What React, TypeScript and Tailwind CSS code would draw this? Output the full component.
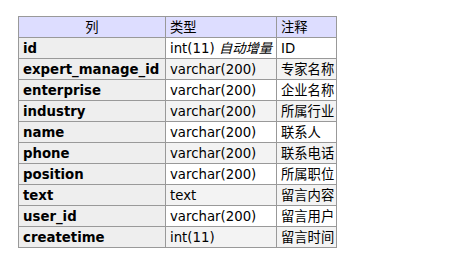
const rows: { name: string; type: string; extra?: string; comment: string }[] = [
  { name: "id", type: "int(11)", extra: "自动增量", comment: "ID" },
  { name: "expert_manage_id", type: "varchar(200)", comment: "专家名称" },
  { name: "enterprise", type: "varchar(200)", comment: "企业名称" },
  { name: "industry", type: "varchar(200)", comment: "所属行业" },
  { name: "name", type: "varchar(200)", comment: "联系人" },
  { name: "phone", type: "varchar(200)", comment: "联系电话" },
  { name: "position", type: "varchar(200)", comment: "所属职位" },
  { name: "text", type: "text", comment: "留言内容" },
  { name: "user_id", type: "varchar(200)", comment: "留言用户" },
  { name: "createtime", type: "int(11)", comment: "留言时间" },
];

export default function App() {
  return (
    <div
      className="w-[463px] h-[270px] bg-white pt-4 pl-[18px] text-[13.3px] text-black"
      style={{ fontFamily: '"DejaVu Sans", "Noto Sans CJK SC", sans-serif' }}
    >
      <table className="border-collapse border border-[#999] table-fixed w-[318px]">
        <colgroup>
          <col className="w-[147px]" />
          <col className="w-[111px]" />
          <col className="w-[60px]" />
        </colgroup>
        <thead>
          <tr className="h-[21px] bg-[#ddddff]">
            <th className="border border-[#999] px-1 pt-[2px] pb-0 font-normal text-center leading-4">列</th>
            <th className="border border-[#999] px-1 pt-[2px] pb-0 font-normal text-left leading-4">类型</th>
            <th className="border border-[#999] px-1 pt-[2px] pb-0 font-normal text-left leading-4">注释</th>
          </tr>
        </thead>
        <tbody>
          {rows.map((r, i) => (
            <tr key={r.name} className={i % 2 === 1 ? "h-[21px] bg-[#f3f3f3]" : "h-[21px] bg-white"}>
              <td className="border border-[#999] bg-[#eeeeee] px-1 pt-[2px] pb-0 font-bold leading-4 whitespace-nowrap">
                {r.name}
              </td>
              <td className="border border-[#999] px-1 pt-[2px] pb-0 leading-4 whitespace-nowrap">
                {r.type}
                {r.extra && <em className="italic"> {r.extra}</em>}
              </td>
              <td className="border border-[#999] px-1 pt-[2px] pb-0 leading-4 whitespace-nowrap">{r.comment}</td>
            </tr>
          ))}
        </tbody>
      </table>
    </div>
  );
}
